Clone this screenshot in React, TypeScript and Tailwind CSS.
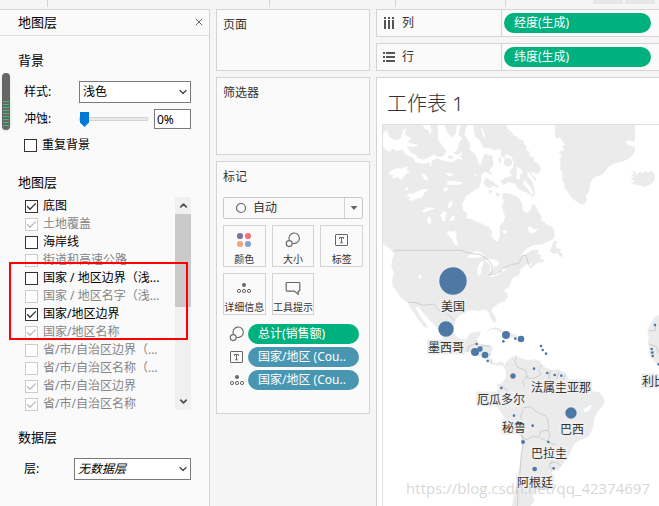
import { useState } from 'react';
import type { ReactNode } from 'react';
import { ChevronDown, ChevronUp, X } from 'lucide-react';
import clsx from 'clsx';

const layers = [
  { name: '底图', checked: true, enabled: true },
  { name: '土地覆盖', checked: true, enabled: false },
  { name: '海岸线', checked: false, enabled: true },
  { name: '街道和高速公路', checked: false, enabled: false },
  { name: '国家 / 地区边界（浅...', checked: false, enabled: true },
  { name: '国家 / 地区名字（浅...', checked: false, enabled: false },
  { name: '国家/地区边界', checked: true, enabled: true },
  { name: '国家/地区名称', checked: true, enabled: false },
  { name: '省/市/自治区边界（...', checked: false, enabled: false },
  { name: '省/市/自治区名称（...', checked: false, enabled: false },
  { name: '省/市/自治区边界', checked: true, enabled: false },
  { name: '省/市/自治区名称', checked: true, enabled: false },
];

// marks in map units, r is the radius
const marks = [
  { x: 231, y: 483, r: 41 },
  { x: 210, y: 627, r: 23 },
  { x: 390, y: 645, r: 12 },
  { x: 435, y: 657, r: 10 },
  { x: 418, y: 656, r: 4 },
  { x: 382, y: 664, r: 4 },
  { x: 302, y: 672, r: 4 },
  { x: 312, y: 687, r: 8 },
  { x: 297, y: 696, r: 12 },
  { x: 327, y: 705, r: 10 },
  { x: 335, y: 723, r: 4 },
  { x: 495, y: 678, r: 4 },
  { x: 500, y: 690, r: 4 },
  { x: 510, y: 701, r: 4 },
  { x: 411, y: 768, r: 8 },
  { x: 474, y: 746, r: 4 },
  { x: 514, y: 759, r: 4 },
  { x: 536, y: 765, r: 4 },
  { x: 556, y: 767, r: 4 },
  { x: 376, y: 804, r: 4 },
  { x: 414, y: 887, r: 4 },
  { x: 585, y: 879, r: 17 },
  { x: 470, y: 917, r: 4 },
  { x: 441, y: 966, r: 6 },
  { x: 517, y: 966, r: 4 },
  { x: 476, y: 1047, r: 7 },
  { x: 533, y: 1045, r: 4 },
  { x: 837, y: 615, r: 4 },
  { x: 827, y: 687, r: 4 },
  { x: 829, y: 698, r: 4 },
  { x: 830, y: 708, r: 4 },
  { x: 848, y: 733, r: 4 },
];

const places = [
  { name: '美国', x: 70, y: 181 },
  { name: '墨西哥', x: 63, y: 222 },
  { name: '厄瓜多尔', x: 118, y: 274 },
  { name: '法属圭亚那', x: 178, y: 262 },
  { name: '秘鲁', x: 131, y: 302 },
  { name: '巴西', x: 189, y: 304 },
  { name: '巴拉圭', x: 166, y: 328 },
  { name: '阿根廷', x: 152, y: 357 },
  { name: '利比里亚', x: 283, y: 256 },
];

function Checkbox({ label, checked, enabled }: { label: string; checked: boolean; enabled: boolean }) {
  const [on, setOn] = useState(checked);

  return (
    <label className={clsx('flex items-center gap-[5px] whitespace-nowrap leading-[18px]', enabled ? 'text-black' : 'text-[#858585]')}>
      <span className="grid shrink-0">
        <input
          type="checkbox"
          checked={on}
          disabled={!enabled}
          onChange={() => setOn(!on)}
          className="col-start-1 row-start-1 size-[13px] appearance-none border border-[#333] bg-white disabled:border-[#ccc]"
        />
        {on && (
          <svg viewBox="0 0 13 13" className="pointer-events-none col-start-1 row-start-1 size-[13px]" fill="none" stroke={enabled ? '#333' : '#bbb'} strokeWidth="1.3">
            <path d="M2.2 6.3 5 9.2 10.8 3.4" />
          </svg>
        )}
      </span>
      {label}
    </label>
  );
}

function Select({ id, options, className }: { id: string; options: string[]; className?: string }) {
  return (
    <div className={clsx('grid h-[22px] items-center', className)}>
      <select id={id} className="col-start-1 row-start-1 h-[22px] w-full appearance-none border border-[#7a7a7a] bg-white pl-[3px] text-black">
        {options.map((option) => (
          <option key={option}>{option}</option>
        ))}
      </select>
      <ChevronDown className="pointer-events-none col-start-1 row-start-1 mr-[2px] size-3 justify-self-end text-[#444]" strokeWidth={2.5} />
    </div>
  );
}

function SizeIcon() {
  return (
    <svg viewBox="0 0 16 16" className="size-4" fill="none" stroke="#666" strokeWidth="1.1">
      <path d="M4.4 8.3A5.2 5.2 0 1 1 7.6 11.2" />
      <circle cx="4.2" cy="11.6" r="3" />
    </svg>
  );
}

function LabelIcon() {
  return (
    <svg viewBox="0 0 16 16" className="size-4" fill="none" stroke="#666">
      <rect x="1.5" y="2.5" width="12" height="11" rx="0.5" />
      <path d="M5.5 7V5.5h4V7M7.5 5.5v5.3M6.2 10.8h2.6" />
    </svg>
  );
}

function DetailIcon() {
  return (
    <svg viewBox="0 0 16 16" className="size-4" fill="none" stroke="#666">
      <circle cx="8" cy="5" r="2" fill="#666" stroke="none" />
      <circle cx="3" cy="11" r="1.6" />
      <circle cx="8" cy="11" r="1.6" />
      <circle cx="13" cy="11" r="1.6" />
    </svg>
  );
}

function ColorIcon() {
  return (
    <svg viewBox="0 0 16 16" className="size-4">
      <circle cx="4" cy="4" r="3.1" fill="#8074a0" />
      <circle cx="12" cy="4" r="3.1" fill="#f9717f" />
      <circle cx="4" cy="12" r="3.1" fill="#f3a581" />
      <circle cx="12" cy="12" r="3.1" fill="#81a7d1" />
    </svg>
  );
}

function TooltipIcon() {
  return (
    <svg viewBox="0 0 16 16" className="size-4" fill="none" stroke="#666" strokeWidth="1.2">
      <path d="M2 2.5h12q.8 0 .8.8v7q0 .8-.8.8h-.8v3.2L9.4 11.1H2q-.8 0-.8-.8v-7q0-.8.8-.8Z" />
    </svg>
  );
}

const markButtons = [
  { name: '颜色', icon: <ColorIcon /> },
  { name: '大小', icon: <SizeIcon /> },
  { name: '标签', icon: <LabelIcon /> },
  { name: '详细信息', icon: <DetailIcon /> },
  { name: '工具提示', icon: <TooltipIcon /> },
];

function Pill({ children, className }: { children: ReactNode; className: string }) {
  return (
    <button className={clsx('h-5 truncate rounded-full px-[10px] text-left text-white', className)}>
      {children}
    </button>
  );
}

function Card({ title, className, children }: { title: string; className?: string; children?: ReactNode }) {
  return (
    <section className={clsx('border border-[#d4d4d4] bg-[#fafafa] px-[6px] pt-[5px]', className)}>
      <h2 className="leading-5">{title}</h2>
      {children}
    </section>
  );
}

function LayerPanel() {
  return (
    <aside className="relative w-[210px] shrink-0 border-t border-r border-[#d4d4d4] bg-[#fafafa] text-black">
      <header className="flex h-[26px] items-center justify-between border-b border-[#e0e0e0] pr-[4px] pl-[18px]">
        <h1 className="text-[13px]">地图层</h1>
        <button aria-label="关闭" className="pb-[2px]">
          <X className="size-3 text-[#666]" strokeWidth={2} />
        </button>
      </header>

      {/* outer scroll thumb */}
      <div className="absolute top-[63px] left-[2px] flex h-[57px] w-2 flex-col justify-end rounded-full bg-[#666] px-px pb-[2px] shadow-sm">
        <div className="h-[27px] bg-[repeating-linear-gradient(#48bd70_0_1px,#666_1px_3px)]" />
      </div>

      <div className="pt-[14px] pr-[18px] pl-[18px]">
        <h2 className="text-[13px] leading-5">背景</h2>
        <div className="mt-[11px] flex items-center pl-[6px]">
          <label htmlFor="style" className="w-[55px]">样式:</label>
          <Select id="style" options={['浅色', '普通', '黑色']} className="flex-1" />
        </div>
        <div className="mt-[6px] flex h-5 items-center pl-[6px]">
          <label htmlFor="washout" className="w-[55px]">冲蚀:</label>
          <input
            id="washout"
            type="range"
            defaultValue={0}
            className="h-4 w-[69px] appearance-none bg-transparent [&::-webkit-slider-runnable-track]:h-1 [&::-webkit-slider-runnable-track]:border [&::-webkit-slider-runnable-track]:border-[#d2d2d2] [&::-webkit-slider-runnable-track]:bg-[#e7eaea] [&::-webkit-slider-thumb]:-mt-[6px] [&::-webkit-slider-thumb]:h-[15px] [&::-webkit-slider-thumb]:w-[9px] [&::-webkit-slider-thumb]:appearance-none [&::-webkit-slider-thumb]:bg-[#0078d7] [&::-webkit-slider-thumb]:[clip-path:polygon(0_0,100%_0,100%_70%,50%_100%,0_70%)]"
          />
          <input aria-label="冲蚀百分比" defaultValue="0%" className="ml-auto h-5 w-[37px] border border-[#7a7a7a] bg-white pl-[2px]" />
        </div>
        <div className="mt-[6px] flex h-5 items-center pl-[6px]">
          <Checkbox label="重复背景" checked={false} enabled />
        </div>

        <h2 className="mt-[17px] text-[13px] leading-5">地图层</h2>
        <div className="relative mt-[5px] flex h-[216px] items-start justify-between">
          <ul className="pl-[7px]">
            {layers.map((layer) => (
              <li key={layer.name} className="h-[18px]">
                <Checkbox label={layer.name} checked={layer.checked} enabled={layer.enabled} />
              </li>
            ))}
          </ul>
          <div className="flex h-[213px] w-4 flex-col items-center bg-[#f0f0f0]">
            <ChevronUp className="my-[3px] size-[11px] text-[#505050]" strokeWidth={4} />
            <div className="h-[93px] w-full bg-[#cacaca]" />
            <ChevronDown className="mt-auto mb-[3px] size-[11px] text-[#505050]" strokeWidth={4} />
          </div>
          <div className="pointer-events-none absolute top-[65px] -left-[9px] h-[78px] w-[179px] border-2 border-[#f00]" />
        </div>

        <h2 className="mt-[14px] text-[13px] leading-5">数据层</h2>
        <div className="mt-[11px] flex items-center pl-[6px]">
          <label htmlFor="data-layer" className="w-[50px]">层:</label>
          <Select id="data-layer" options={['无数据层']} className="flex-1 italic" />
        </div>
      </div>
    </aside>
  );
}

function MarksCard() {
  return (
    <Card title="标记" className="h-[253px]">
      <div className="mt-[10px] grid h-[22px] items-center rounded-xs border border-[#c8c8c8]">
        <select aria-label="标记类型" className="col-start-1 row-start-1 h-5 appearance-none pl-[29px]">
          <option>自动</option>
        </select>
        <svg viewBox="0 0 12 12" className="pointer-events-none col-start-1 row-start-1 ml-[11px] size-3" fill="none" stroke="#666" strokeWidth="1.2">
          <circle cx="6" cy="6" r="4.5" />
        </svg>
        <span className="pointer-events-none col-start-1 row-start-1 flex h-5 w-[18px] items-center justify-center justify-self-end border-l border-[#d4d4d4]">
          <svg viewBox="0 0 8 4" className="h-1 w-2" fill="#666">
            <path d="M0.5 0h7L4 4Z" />
          </svg>
        </span>
      </div>

      <div className="mt-[6px] grid grid-cols-3 gap-[6px]">
        {markButtons.map((button) => (
          <button key={button.name} className="flex h-[42px] flex-col items-center justify-between border border-[#d4d4d4] pt-[6px] text-[10px] leading-[14px] whitespace-nowrap">
            {button.icon}
            {button.name}
          </button>
        ))}
      </div>

      <ul className="mt-[9px] flex flex-col gap-[3px] pr-[4px] pl-[6px]">
        <li className="flex items-center gap-[3px]">
          <SizeIcon />
          <Pill className="flex-1 bg-[#00b180]">总计(销售额)</Pill>
        </li>
        <li className="flex items-center gap-[3px]">
          <LabelIcon />
          <Pill className="flex-1 bg-[#4996b2]">国家/地区 (Cou..</Pill>
        </li>
        <li className="flex items-center gap-[3px]">
          <DetailIcon />
          <Pill className="flex-1 bg-[#4996b2]">国家/地区 (Cou..</Pill>
        </li>
      </ul>
    </Card>
  );
}

function Shelf({ title, icon, field }: { title: string; icon: ReactNode; field: string }) {
  return (
    <section className="flex h-7 items-center border border-r-0 border-[#d4d4d4] bg-[#fafafa]">
      <div className="flex h-full w-[125px] shrink-0 items-center gap-[7px] border-r border-[#d4d4d4] pl-[6px]">
        {icon}
        <h2>{title}</h2>
      </div>
      <Pill className="mr-2 ml-[2px] flex-1 bg-[#00b180]">{field}</Pill>
    </section>
  );
}

function WorldMap() {
  return (
    <div className="relative flex-1 overflow-hidden border-t border-l border-[#e0e0e0] bg-white">
      <svg viewBox="21 15 828 1143" className="h-[381px] w-[276px]" overflow="visible" role="img" aria-label="地图">
        <g fill="#ebebeb">
          {/* canada, usa, mexico and central america */}
          <path d="M21 94 36 92 46 80 58 92 76 96 90 104 98 114 114 126 136 128 152 124 168 126 160 112 174 104 184 116 202 112 208 120 226 122 230 106 240 92 250 80 262 84 260 98 270 106 276 118 290 124 300 140 292 148 306 160 302 172 312 180 306 196 292 200 284 208 272 214 262 230 260 248 264 260 260 274 270 286 272 294 286 298 302 300 314 306 324 316 340 322 348 334 346 346 354 360 362 364 366 350 372 342 370 322 364 312 374 308 382 300 388 290 378 282 382 270 376 258 384 246 378 230 382 220 394 216 404 222 412 220 420 230 432 232 434 244 446 254 440 264 442 274 454 278 464 268 466 254 474 252 482 262 486 276 498 290 494 300 506 306 512 316 526 318 534 328 536 348 528 360 512 366 502 372 482 374 466 378 450 388 440 400 434 410 448 404 464 392 478 388 490 390 484 400 496 406 494 416 506 420 502 426 484 430 470 440 462 446 458 438 472 428 464 430 448 436 434 448 430 464 410 474 404 488 400 500 390 508 382 512 394 520 396 532 386 544 370 550 354 560 346 572 352 582 360 596 358 608 352 606 342 590 338 576 324 568 310 574 290 570 272 572 268 580 252 584 240 596 234 618 234 638 242 652 256 658 274 656 280 642 294 636 314 634 312 646 302 658 304 670 320 672 340 676 350 682 346 700 342 714 350 728 362 730 374 724 384 730 382 742 374 734 366 738 360 736 346 732 336 722 322 712 308 708 292 700 272 696 256 686 236 678 218 670 200 654 192 636 176 616 160 600 146 584 136 572 130 562 118 560 124 574 134 588 142 602 152 614 156 624 144 620 134 606 122 594 116 580 104 566 98 552 84 540 72 530 62 514 50 498 48 480 54 460 46 440 48 420 54 402 44 388 34 380 21 372Z" />
          {/* arctic mainland and baffin island */}
          <path d="M21 15H390L398 30 408 36 412 46 424 50 430 58 440 60 444 72 454 80 450 90 462 96 460 108 472 112 474 124 486 130 496 148 488 160 476 160 462 152 472 168 482 180 470 186 474 200 478 222 470 230 450 216 420 212 380 216 300 300 21 160Z" />

          {/* newfoundland and the caribbean */}
          <path d="M534 362l-6 14-6 18 10 8 12-2 6 6 8 8 2-10-8-8 4-8-14-4-2-8 4-12Z" />
          <path d="M332 632l14-8 16-2 14 8 12 6-10 2-16-8-14-2-14 6Z" />
          <path d="M394 642l10-4 14 6 10 6-12 4-22-2Z" />

          {/* greenland, iceland */}
          <path d="M538 15 536 40 540 56 552 52 560 66 568 74 558 80 566 90 554 92 548 98 558 104 552 116 554 132 552 148 560 158 558 178 566 194 566 206 576 216 584 230 598 242 612 252 624 254 632 240 630 226 640 212 642 192 650 176 664 168 678 164 688 154 696 142 712 132 736 126 758 116 770 106 778 90 776 80 758 76 748 68 756 60 772 66 778 56 776 40 778 15Z" />
          <path d="M768 152l10 4 4 12 6-12 12 4 8-6 10 4 8-6 10 12 2 14-12 14-20 10-14-6-14-2-12-6 12-4-16-8 14-4-12-6 10-4Z" />

          {/* south america */}
          <path d="M384 742 388 730 398 718 410 710 424 704 420 716 430 712 440 716 458 720 474 718 492 722 498 734 510 744 528 750 546 748 562 756 572 762 576 776 590 786 612 796 634 804 648 814 668 816 682 830 686 844 680 858 664 876 656 892 654 912 646 934 638 950 618 958 598 968 588 984 582 1000 570 1020 556 1038 546 1050 534 1054 518 1048 530 1062 526 1074 506 1082 492 1086 490 1098 474 1106 480 1116 470 1128 476 1142 464 1158 408 1158 412 1134 418 1110 422 1090 426 1066 430 1040 434 1010 438 980 436 950 420 934 400 918 386 896 372 872 360 852 356 838 362 820 366 802 376 790 388 776 390 756Z" />
          {/* west africa */}
          <path d="M849 584 838 590 830 600 822 616 814 632 818 650 816 670 820 684 818 700 826 712 834 724 849 738Z" />
        </g>

        {/* arctic channels and hudson bay */}
        <g transform="translate(21 15)">
          <g fill="#fff">
            <path d="M0 30 4 20 12 16 18 34 34 46 46 44 54 38 60 16 70 8 66 28 84 40 74 52 90 56 108 60 92 66 72 64 78 76 86 84 98 90 104 100 122 104 140 96 154 88 160 94 176 96 184 90 190 76 178 62 166 44 164 0H184L192 20 206 38 218 28 222 0H232L226 30 238 40 228 52 224 72 212 84 222 90 240 80 232 94 240 104 222 102 208 112 184 108 160 100 146 108 144 128 138 112 118 116 96 112 92 98 70 90 58 74 40 78 28 70 22 80 8 74 0 62Z" />
            <path d="M252 0 244 28 254 44 262 60 260 76 274 84 282 100 290 122 296 112 300 96 304 86 316 90 330 94 336 78 322 70 302 68 290 46 276 34 270 0ZM298 8l6 18 4 16-8-10-6-20ZM118 0l10 14 6-2 8 18 4-16-6-14Z" />
            <path d="M334 76 348 72 356 80 352 92 364 100 368 86 384 94 392 108 390 128 380 138 386 154 364 158 352 170 362 180 378 172 396 176 404 190 422 200 440 212 452 222 470 230 446 238 446 250 434 262 420 252 416 230 402 214 380 206 362 202 354 208 344 206 350 220 360 234 356 252 366 272 362 290 350 302 346 316 352 330 344 350 334 342 326 330 330 312 310 300 285 292 258 278 252 264 240 256 238 236 250 212 268 200 288 188 296 166 294 152 306 140 328 150 320 134 332 120 328 100Z" />
            <path d="M400 124l14 8 8 12-12 4 2 16-14-4 4-12ZM432 138l14 14 14 22-12-4-14-16ZM424 164l16 18 14 26-10 0-12-20-12-10Z" />
            <path d="M272 142l10 8-4 6ZM358 318l12-4 2 8-8 6Z" />
          </g>
          <g fill="#ebebeb">
            <path d="M364 102l10-4 14 8-2 14-12 6-12-8ZM310 156l8 8 14 6 8 12-12 2-8 6-12-6-8-10ZM316 196l8-2 6 6-10 6ZM342 200l6 8-4 8-6-8ZM334 182l10-2 4 8-8 0Z" />
            <path d="M194 92l12 0 6 8-14 2ZM346 100l6-4 4 12-8 6Z" />
          </g>
        </g>

        {/* lakes */}
        <g fill="#fff">
          <path d="M40 156l22-12 14 2 20-8-4 12 10 4-14 10-12 16-12-8-16 4 4-12-14 0Z" />
          <path d="M94 218l16 4 14-8 16-6 18 0-14 12-4 12-18 4-12 6-14-2 8-10-16 0 10-6ZM86 204l8-2 4 8-8 0Z" />
          <path d="M136 158l10 4 10 12-2 8-8-4-8-12ZM208 160l18 0 8 6-16 2ZM214 184l20-2 30 6-14 6-36 0ZM202 206l10-6 4 6-8 12Z" />
          <path d="M140 270l14-8 24 2-14 6-22 8ZM154 294l8-4 4 10-4 14-8-8Z" />
          <path d="M192 286l10-12 10 4-4 14 0 10-8 2-2-10ZM218 250l8-10 4 12-8 12-6-2ZM220 302l8-14 10 0-6 14Z" />
          <path d="M212 342l8-10 10 4 8-6 4 16-2 10 6 18-8 2-10-18-8-10ZM456 322l12-2 4 8 14-2-10 12-14 0-6-8Z" />
          <path d="M276 408l12-10 14-6 16 6 8 10-10 4-16 2-22 0Z" />
          <path d="M306 466l-2-20 8-18 8-6 4 8-8 14 0 14-8 10ZM326 420l16-4 18 4 10 8-8 12-8-2-6 18-8-2 4-18-8-6Z" />
          <path d="M340 464l14-6 18-4-6 10-22 8ZM368 452l14-8 10 2-10 8ZM126 468l4-6 8 8-4 8Z" />
          <path d="M626 866l10-8 12-4-6 14-14 10-6-6Z" />
        </g>

        {/* country borders */}
        <g fill="none" stroke="#c8c8c8" strokeWidth="2.5">
          <path d="M54 391h202l14 6 20 4 22 2 16 10 12 10 8 14 0 20-8 8 20-4 22-16 24-12 22-2 6-12 6-12 10 0 4 14 4 14" />
          <path d="M98 546l22 2 20 8 34-4 12 16 10 10 12-2 18 16 8 10" />
          <path d="M272 696l8-18 16-6 8-10M304 690l14-12 26 0M320 710l24-8M348 716l-2 14" />
          <path d="M424 708l-8 14 8 20 24 8 6 20-14 14 4 16M362 794l22 8 20 20 26 4-4 14M498 734l-10 14 6 16-26 14-20-8" />
          <path d="M524 752l-6 22 12 14M548 754l-6 24M568 764l-10 20M360 844l18 0 22-24M440 864l24-4 22 18 26 12 8 32-6 12M442 870l-8 18 6 18-4 22 4 32" />
          <path d="M436 950l16 10 20-12 16 4 6-18 20-4 8 12-6 22-24-10M520 966l22 12 2 24M544 1002l-24 34 8 20M520 1030l22-4 12 12M444 962l-8 40-2 36-6 50-2 30-2 40" />
          <path d="M820 672l22 8 4 20M822 698l14-4M818 632h20v-24" />
        </g>

        <g fill="#4e79a7">
          {marks.map((mark) => (
            <circle key={`${mark.x}-${mark.y}`} cx={mark.x} cy={mark.y} r={mark.r} />
          ))}
        </g>
      </svg>

      {places.map((place) => (
        <span
          key={place.name}
          className="absolute -translate-x-1/2 -translate-y-1/2 bg-[#eeeeee] px-px text-xs leading-[15px] whitespace-nowrap text-[#333]"
          style={{ left: place.x, top: place.y }}
        >
          {place.name}
        </span>
      ))}
      <span className="absolute right-[9px] bottom-2 font-['Open_Sans',sans-serif] text-[15px] leading-5 text-[#bbb]/60">
        https://blog.csdn.net/qq_42374697
      </span>
    </div>
  );
}

export default function App() {
  return (
    <div className="flex min-h-screen flex-col overflow-hidden bg-[#f5f5f5] font-['Noto_Sans','Noto_Sans_CJK_SC',sans-serif] text-xs text-[#333]">
      {/* bottom edge of the toolbar */}
      <div className="flex h-[9px] shrink-0 items-start">
        <div className="h-[7px] w-12 border-r border-[#d4d4d4]" />
        <div className="h-[7px] w-[222px] border-r border-[#d4d4d4]" />
        <div className="h-[7px] w-[126px] border-r border-[#d4d4d4]" />
        <div className="h-[7px] w-[110px] border-r border-[#d4d4d4]" />
        <div className="ml-auto h-1 w-[30px] bg-[#e6e6e6]" />
        <div className="mr-1 ml-[2px] h-1 w-[30px] bg-[#e6e6e6]" />
      </div>

      <div className="flex flex-1">
        <LayerPanel />

        <div className="ml-[6px] flex w-[154px] shrink-0 flex-col gap-[6px]">
          <Card title="页面" className="h-[62px]" />
          <Card title="筛选器" className="h-[78px]" />
          <MarksCard />
        </div>

        <main className="ml-[6px] flex min-w-0 flex-1 flex-col gap-[6px]">
          <Shelf
            title="列"
            field="经度(生成)"
            icon={
              <svg viewBox="0 0 12 12" className="size-3" fill="#555">
                <path d="M1 0h2v2H1zM5 0h2v2H5zM9 0h2v2H9zM1 3h2v9H1zM5 3h2v9H5zM9 3h2v9H9z" />
              </svg>
            }
          />
          <Shelf
            title="行"
            field="纬度(生成)"
            icon={
              <svg viewBox="0 0 12 12" className="size-3" fill="#555">
                <path d="M0 1h2v2H0zM0 5h2v2H0zM0 9h2v2H0zM3 1h9v2H3zM3 5h9v2H3zM3 9h9v2H3z" />
              </svg>
            }
          />
          <section className="flex flex-1 flex-col border-t border-l border-[#d4d4d4] bg-white pl-[5px]">
            <h1 className="pt-3 pb-[6px] pl-[5px] text-xl leading-7 font-light">工作表 1</h1>
            <WorldMap />
          </section>
        </main>
      </div>
    </div>
  );
}
